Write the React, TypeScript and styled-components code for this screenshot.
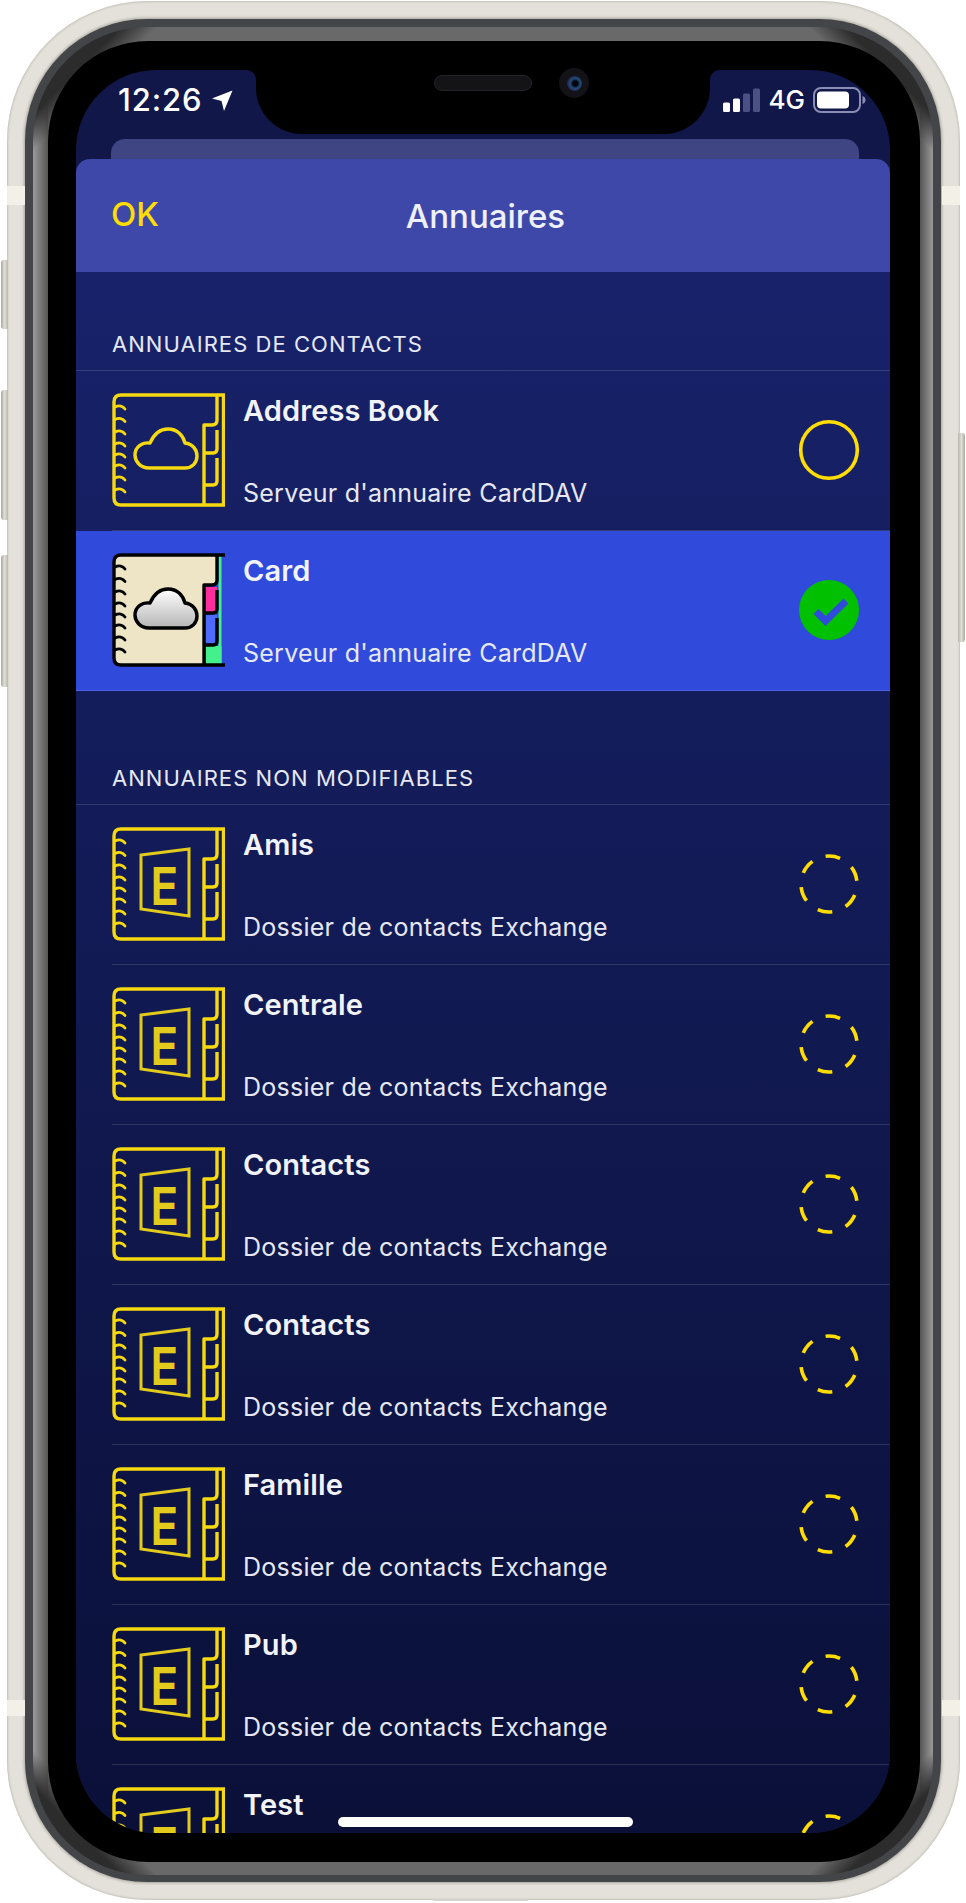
import React from "react";
import styled, { createGlobalStyle } from "styled-components";

const Global = createGlobalStyle`
  html, body { margin: 0; padding: 0; background: #fff; }
  body { font-family: Inter, "Noto Sans", "Liberation Sans", sans-serif; }
  * { box-sizing: border-box; }
`;

const Page = styled.div`
  width: 966px;
  height: 1903px;
  padding: 1px 6px 3px 7px;
  display: flex;
  overflow: hidden;
`;

const Frame = styled.div`
  position: relative;
  flex: 1;
  display: flex;
  padding: 18px 19px 18px 18px;
  border-radius: 140px;
  background: #e3e1da;
  box-shadow: inset 0 0 2px 1px #c4c2b8;
`;

const SideButton = styled.div<{ $side: "left" | "right"; $top: number; $height: number }>`
  position: absolute;
  top: ${(p) => p.$top}px;
  height: ${(p) => p.$height}px;
  width: 7px;
  ${(p) => (p.$side === "left" ? "left: -6px; border-radius: 3px 0 0 3px;" : "right: -5px; border-radius: 0 3px 3px 0;")}
  background: ${(p) =>
    p.$side === "left"
      ? "linear-gradient(90deg, #a9a79d, #e0ded6 50%, #b9b7ad)"
      : "linear-gradient(90deg, #b9b7ad, #e0ded6 50%, #a9a79d)"};
`;

const BottomPort = styled.div`
  position: absolute;
  left: 426px;
  bottom: -1px;
  width: 95px;
  height: 2px;
  background: #d5d3cb;
`;

const AntennaBand = styled.div<{ $side: "left" | "right"; $top: number; $height: number }>`
  position: absolute;
  top: ${(p) => p.$top}px;
  height: ${(p) => p.$height}px;
  width: 18px;
  ${(p) => (p.$side === "left" ? "left: 0;" : "right: 0;")}
  background: #f3f0e8;
`;

const DarkRim = styled.div`
  flex: 1;
  display: flex;
  padding: 8px 8px 7px 8px;
  border-radius: 122px;
  background: #444549;
  box-shadow: 0 0 3px 1px #a5a399;
`;

const Bevel = styled.div`
  flex: 1;
  display: flex;
  padding: 14px 13px 13px 15px;
  border-radius: 114px;
  background:
    linear-gradient(135deg, #2c2c2c 62px, transparent 88px),
    linear-gradient(225deg, #2c2c2c 62px, transparent 88px),
    linear-gradient(45deg, #2c2c2c 62px, transparent 88px),
    linear-gradient(315deg, #2c2c2c 62px, transparent 88px),
    linear-gradient(
      90deg,
      #9a9a9a 0,
      #555 15px,
      transparent 15px,
      transparent calc(100% - 13px),
      #555 calc(100% - 13px),
      #9a9a9a 100%
    ),
    #696969;
`;

const Bezel = styled.div`
  position: relative;
  flex: 1;
  display: flex;
  padding: 29px 30px 29px 28px;
  border-radius: 100px;
  background: #000;
`;

const Notch = styled.div`
  position: absolute;
  left: 208px;
  top: 0;
  width: 454px;
  height: 93px;
  padding: 34px 0 0 178px;
  display: flex;
  align-items: flex-start;
  gap: 27px;
  z-index: 3;
  background: #000;
  border-radius: 0 0 46px 46px;

  &::before,
  &::after {
    content: "";
    position: absolute;
    top: 29px;
    width: 10px;
    height: 10px;
  }
  &::before {
    left: -10px;
    background: radial-gradient(circle at 0 100%, transparent 9.5px, #000 10.5px);
  }
  &::after {
    right: -10px;
    background: radial-gradient(circle at 100% 100%, transparent 9.5px, #000 10.5px);
  }
`;

const Speaker = styled.div`
  width: 98px;
  height: 16px;
  border-radius: 8px;
  background: #141416;
  border: 1px solid #232327;
`;

const Camera = styled.div`
  width: 30px;
  height: 30px;
  margin-top: -7px;
  border-radius: 50%;
  background: #131317;
  display: flex;
  align-items: center;
  justify-content: center;
`;

const Lens = styled.div`
  width: 15px;
  height: 15px;
  border-radius: 50%;
  background: radial-gradient(circle at 55% 50%, #05060e 22%, #1f4d78 45%, #2a2350 70%, #0a0a12 100%);
`;

const Screen = styled.div`
  position: relative;
  flex: 1;
  display: flex;
  flex-direction: column;
  overflow: hidden;
  border-radius: 80px;
  background: #12174a;
`;

const StatusBar = styled.div`
  height: 69px;
  flex: none;
  display: flex;
  align-items: flex-start;
  justify-content: space-between;
  padding: 11px 23px 0 42px;
  color: #fff;
`;

const StatusLeft = styled.div`
  display: flex;
  align-items: center;
  gap: 8px;
`;

const Time = styled.span`
  font-size: 31px;
  line-height: 38px;
  font-weight: 500;
  letter-spacing: 0.9px;
`;

const StatusRight = styled.div`
  display: flex;
  align-items: center;
  height: 38px;
  gap: 8px;
`;

const Network = styled.span`
  font-size: 26px;
  line-height: 38px;
  font-weight: 500;
`;

const Peek = styled.div`
  height: 20px;
  flex: none;
  margin: 0 31px 0 35px;
  border-radius: 14px 14px 0 0;
  background: #3f4482;
`;

const ModalHeader = styled.div`
  position: relative;
  flex: none;
  height: 113px;
  display: flex;
  align-items: center;
  justify-content: center;
  padding: 0 33px 0 38px;
  border-radius: 14px 14px 0 0;
  background: #3e48a8;
`;

const OkButton = styled.span`
  position: absolute;
  left: 35px;
  top: 35px;
  font-size: 33px;
  line-height: 40px;
  font-weight: 500;
  color: #ffdd00;
`;

const Title = styled.span`
  font-size: 33px;
  line-height: 40px;
  font-weight: 500;
  color: #eef0fa;
`;

const Body = styled.div`
  flex: 1;
  overflow: hidden;
  display: flex;
  flex-direction: column;
  background: linear-gradient(180deg, #18226a 0, #0a1038 100%);
`;

const SectionHead = styled.div<{ $height: number }>`
  height: ${(p) => p.$height}px;
  flex: none;
  display: flex;
  align-items: flex-end;
  padding: 0 36px 13px;
  border-bottom: 1px solid rgba(255, 255, 255, 0.13);
  font-size: 22px;
  line-height: 26px;
  letter-spacing: 1.05px;
  color: #e6e8f4;
`;

const Row = styled.div<{ $selected?: boolean }>`
  height: 160px;
  flex: none;
  display: flex;
  padding-left: ${(p) => (p.$selected ? 0 : 36)}px;
  background: ${(p) => (p.$selected ? "#304bdc" : "transparent")};
`;

const RowInner = styled.div<{ $selected?: boolean }>`
  flex: 1;
  display: flex;
  align-items: center;
  gap: 18px;
  padding: 0 29px 1px ${(p) => (p.$selected ? 36 : 0)}px;
  border-bottom: 1px solid rgba(255, 255, 255, 0.13);
`;

const IconSvg = styled.svg`
  width: 113px;
  height: 114px;
  flex: none;
`;

const RowText = styled.div`
  flex: 1;
  height: 116px;
  padding-top: 2px;
  display: flex;
  flex-direction: column;
  justify-content: space-between;
`;

const RowTitle = styled.div`
  font-size: 29px;
  line-height: 34px;
  font-weight: 600;
  letter-spacing: 0.1px;
  color: #f2f3f8;
`;

const RowSub = styled.div`
  font-size: 25px;
  line-height: 30px;
  letter-spacing: 0.24px;
  color: #e6e8f2;
`;

const StatusSvg = styled.svg`
  width: 64px;
  height: 64px;
  flex: none;
`;

const HomeBar = styled.div`
  position: absolute;
  left: 262px;
  bottom: 6px;
  width: 295px;
  height: 10px;
  border-radius: 5px;
  background: #fff;
  z-index: 2;
`;

const YELLOW = "#f6d90f";
const RING_YS = [14, 26.5, 39, 51, 62, 73, 85, 97];

type Kind = "cloud" | "cloudColor" | "exchange";

const CLOUD = "M37 75 C28 75 23 68 23 62 C23 54 30 49 38 50 C42 41 48 36 56 36 C65 36 71 42 73 50 C81 51 85 57 85 63 C85 70 80 75 73 75 Z";

function BookIcon({ kind }: { kind: Kind }) {
  const color = kind === "cloudColor";
  const line = color ? "#000" : YELLOW;
  return (
    <IconSvg viewBox="0 0 113 114" fill="none">
      {color && (
        <>
          <defs>
            <linearGradient id="cloudGrad" x1="0" y1="0" x2="0" y2="1">
              <stop offset="0" stopColor="#ffffff" />
              <stop offset="1" stopColor="#b5b5b5" />
            </linearGradient>
          </defs>
          <path d="M9 2H105V32H92V112H9Q2 112 2 105V9Q2 2 9 2Z" fill="#ede5c6" />
          <rect x="94" y="34" width="11" height="25" fill="#ff2e9e" />
          <rect x="94" y="62" width="11" height="28" fill="#4f6bff" />
          <rect x="94" y="93" width="15.5" height="18" fill="#44f08c" />
          <rect x="106.5" y="3" width="3" height="108" fill="#44f08c" />
        </>
      )}
      <g stroke={line} strokeWidth="3.4" strokeLinecap="round" strokeLinejoin="round">
        <path d="M113 2H9Q2 2 2 9V105Q2 112 9 112H113" strokeLinecap="butt" />
        {!color && <path d="M111.5 2V112" strokeLinecap="butt" />}
        <path d="M105 3V27Q105 32 100 32H92V112" strokeLinecap="butt" />
        <path d="M92 60H101Q105 60 105 56V37" strokeLinecap="butt" />
        <path d="M92 92H101Q105 92 105 88V65" strokeLinecap="butt" />
        {RING_YS.map((y) => (
          <path key={y} d={`M3 ${y}C7 ${y - 2} 11 ${y - 1} 13 ${y + 2}`} strokeWidth="2.8" />
        ))}
        {kind !== "exchange" && <path d={CLOUD} fill={color ? "url(#cloudGrad)" : "none"} />}
      </g>
      {kind === "exchange" && (
        <>
          <path d="M29 28L77 22V89L29 82Z" stroke="#e2cb1c" strokeWidth="3" strokeLinejoin="miter" />
          <text
            x="0"
            y="0"
            transform="translate(39 78) scale(0.72 1)"
            fontFamily="'Liberation Sans', sans-serif"
            fontWeight="700"
            fontSize="56"
            fill="#e2cb1c"
          >
            E
          </text>
        </>
      )}
    </IconSvg>
  );
}

function Mark({ state }: { state: "open" | "checked" | "locked" }) {
  if (state === "checked") {
    return (
      <StatusSvg viewBox="0 0 64 64">
        <circle cx="32" cy="32" r="30" fill="#00c000" />
        <path d="M19 33.5L28.5 43L49 23" fill="none" stroke="#304bdc" strokeWidth="7" />
      </StatusSvg>
    );
  }
  if (state === "open") {
    return (
      <StatusSvg viewBox="0 0 64 64">
        <circle cx="32" cy="32" r="28.3" fill="none" stroke="#ffdd00" strokeWidth="3.6" />
      </StatusSvg>
    );
  }
  return (
    <StatusSvg viewBox="0 0 64 64">
      <circle
        cx="32"
        cy="32"
        r="28"
        fill="none"
        stroke="#ffdd00"
        strokeWidth="3.6"
        strokeDasharray="14.8 14.52"
        transform="rotate(-97 32 32)"
      />
    </StatusSvg>
  );
}

function ContactRow(props: {
  name: string;
  sub: string;
  kind: Kind;
  state: "open" | "checked" | "locked";
  selected?: boolean;
}) {
  return (
    <Row $selected={props.selected}>
      <RowInner $selected={props.selected}>
        <BookIcon kind={props.kind} />
        <RowText>
          <RowTitle>{props.name}</RowTitle>
          <RowSub>{props.sub}</RowSub>
        </RowText>
        <Mark state={props.state} />
      </RowInner>
    </Row>
  );
}

const EXCHANGE = ["Amis", "Centrale", "Contacts", "Contacts", "Famille", "Pub", "Test"];

export default function App() {
  return (
    <Page>
      <Global />
      <Frame>
        <SideButton $side="left" $top={259} $height={69} />
        <SideButton $side="left" $top={389} $height={130} />
        <SideButton $side="left" $top={554} $height={132} />
        <SideButton $side="right" $top={432} $height={209} />
        <BottomPort />
        <AntennaBand $side="left" $top={185} $height={19} />
        <AntennaBand $side="right" $top={185} $height={19} />
        <AntennaBand $side="left" $top={1699} $height={16} />
        <AntennaBand $side="right" $top={1699} $height={16} />
        <DarkRim>
          <Bevel>
            <Bezel>
              <Notch>
                <Speaker />
                <Camera>
                  <Lens />
                </Camera>
              </Notch>
              <Screen>
                <StatusBar>
                  <StatusLeft>
                    <Time>12:26</Time>
                    <svg width="22" height="22" viewBox="0 0 22 22">
                      <path d="M21.5 1.5L1 9.5L10.5 12L13 22Z" fill="#fff" />
                    </svg>
                  </StatusLeft>
                  <StatusRight>
                    <svg width="38" height="24" viewBox="0 0 38 24">
                      <rect x="0" y="14.5" width="7" height="9.5" rx="1.5" fill="#fff" />
                      <rect x="10" y="10.5" width="7" height="13.5" rx="1.5" fill="#fff" />
                      <rect x="20" y="5.5" width="7" height="18.5" rx="1.5" fill="#4b5085" />
                      <rect x="30" y="0.5" width="7" height="23.5" rx="1.5" fill="#4b5085" />
                    </svg>
                    <Network>4G</Network>
                    <svg width="54" height="26" viewBox="0 0 54 26">
                      <rect x="1" y="1" width="46" height="24" rx="7" fill="none" stroke="#8a8db4" strokeWidth="2" />
                      <rect x="4" y="4.5" width="32" height="17" rx="4" fill="#fff" />
                      <path d="M49.5 9C52 10 52.5 11.5 52.5 13S52 16 49.5 17Z" fill="#8a8db4" />
                    </svg>
                  </StatusRight>
                </StatusBar>
                <Peek />
                <ModalHeader>
                  <OkButton>OK</OkButton>
                  <Title>Annuaires</Title>
                </ModalHeader>
                <Body>
                  <SectionHead $height={99}>ANNUAIRES DE CONTACTS</SectionHead>
                  <ContactRow name="Address Book" sub="Serveur d'annuaire CardDAV" kind="cloud" state="open" />
                  <ContactRow
                    name="Card"
                    sub="Serveur d'annuaire CardDAV"
                    kind="cloudColor"
                    state="checked"
                    selected
                  />
                  <SectionHead $height={114}>ANNUAIRES NON MODIFIABLES</SectionHead>
                  {EXCHANGE.map((name, i) => (
                    <ContactRow
                      key={`${name}-${i}`}
                      name={name}
                      sub="Dossier de contacts Exchange"
                      kind="exchange"
                      state="locked"
                    />
                  ))}
                </Body>
                <HomeBar />
              </Screen>
            </Bezel>
          </Bevel>
        </DarkRim>
      </Frame>
    </Page>
  );
}
